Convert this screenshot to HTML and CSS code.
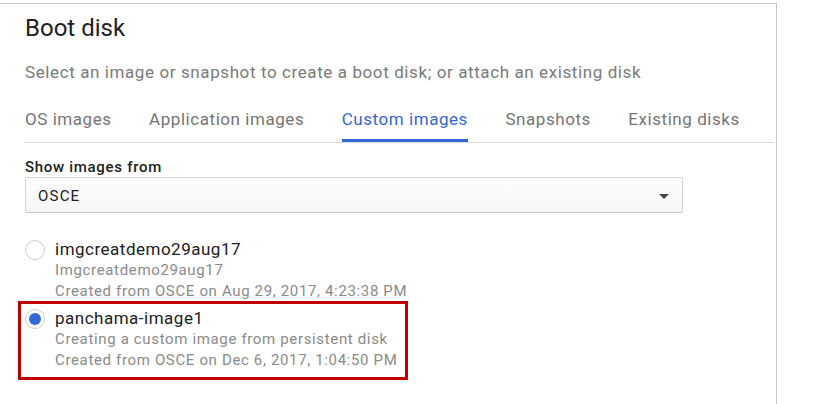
FILE: index.html
```html
<!DOCTYPE html>
<html>
<head>
<meta charset="utf-8">
<link rel="stylesheet" href="styles.css">
</head>
<body>
<div class="panel">
  <h1 class="title">Boot disk</h1>
  <p class="desc">Select an image or snapshot to create a boot disk; or attach an existing disk</p>
  <div class="tabs">
    <div class="tab">OS images</div>
    <div class="tab">Application images</div>
    <div class="tab active">Custom images</div>
    <div class="tab">Snapshots</div>
    <div class="tab">Existing disks</div>
  </div>
  <div class="label">Show images from</div>
  <div class="select">
    <span class="select-value">OSCE</span>
    <span class="caret"></span>
  </div>
  <div class="list">
    <div class="item">
      <span class="radio"></span>
      <div class="item-text">
        <div class="item-title">imgcreatdemo29aug17</div>
        <div class="item-sub">Imgcreatdemo29aug17</div>
        <div class="item-sub">Created from OSCE on Aug 29, 2017, 4:23:38 PM</div>
      </div>
    </div>
    <div class="item highlight">
      <span class="radio checked"></span>
      <div class="item-text">
        <div class="item-title">panchama-image1</div>
        <div class="item-sub">Creating a custom image from persistent disk</div>
        <div class="item-sub">Created from OSCE on Dec 6, 2017, 1:04:50 PM</div>
      </div>
    </div>
  </div>
</div>
</body>
</html>
```
FILE: styles.css
```css
* { box-sizing: border-box; }
html, body { margin: 0; padding: 0; background: #fff; }
body { font-family: Roboto, "Noto Sans", Arial, sans-serif; color: #212121; }

.panel {
  margin-top: 3px;
  width: 777px;
  min-height: 401px;
  border-top: 1px solid #c6c6c6;
  border-right: 1px solid #c6c6c6;
  padding: 10px 2px 0 25px;
}

.title {
  margin: 0;
  font-size: 24px;
  line-height: 28px;
  font-weight: 400;
  color: #212121;
}

.desc {
  margin: 20px 0 0;
  font-size: 17px;
  line-height: 20px;
  letter-spacing: 0.6px;
  color: #7a7a7a;
}

.tabs {
  margin-top: 26px;
  display: flex;
  gap: 37.5px;
  border-bottom: 1px solid #dcdcdc;
}
.tab {
  font-size: 17px;
  line-height: 20px;
  letter-spacing: 0.55px;
  color: #757575;
  padding-bottom: 10px;
  border-bottom: 3px solid transparent;
  margin-top: 1px;
}
.tab.active {
  color: #3367d6;
  border-bottom-color: #3367d6;
}

.label {
  margin-top: 15px;
  font-size: 15px;
  line-height: 18px;
  letter-spacing: 0.7px;
  font-weight: 500;
  color: #212121;
}

.select {
  margin-top: 1px;
  width: 658px;
  height: 36px;
  border: 1px solid #d6d6d6;
  border-bottom-color: #c8c8c8;
  border-radius: 2px;
  background: linear-gradient(#fdfdfd, #f6f6f6);
  display: flex;
  align-items: center;
  justify-content: space-between;
  padding: 0 13px 0 12px;
}
.select-value {
  font-size: 15px;
  line-height: 16px;
  letter-spacing: 1.2px;
  color: #212121;
  padding-top: 1px;
}
.caret {
  width: 0;
  height: 0;
  border-left: 5px solid transparent;
  border-right: 5px solid transparent;
  border-top: 5px solid #444;
  margin-top: 2px;
}

.list {
  margin-top: 26px;
}
.item {
  display: flex;
  gap: 10px;
}
.item.highlight {
  width: fit-content;
  margin: -1px 0 0 -7px;
  border: 3px solid #c00000;
  padding: 4px 8px 6px 4px;
}
.radio {
  flex: none;
  width: 20px;
  height: 20px;
  margin-top: 1px;
  border: 1px solid #cdcdcd;
  border-radius: 50%;
  background: #fff;
  display: flex;
  align-items: center;
  justify-content: center;
}
.radio.checked::after {
  content: "";
  width: 12px;
  height: 12px;
  border-radius: 50%;
  background: #3367d6;
}
.item-title {
  font-size: 17px;
  line-height: 21px;
  letter-spacing: 0.5px;
  color: #212121;
}
.item-sub {
  font-size: 15px;
  line-height: 21px;
  letter-spacing: 0.65px;
  color: #8a8a8a;
}
```
